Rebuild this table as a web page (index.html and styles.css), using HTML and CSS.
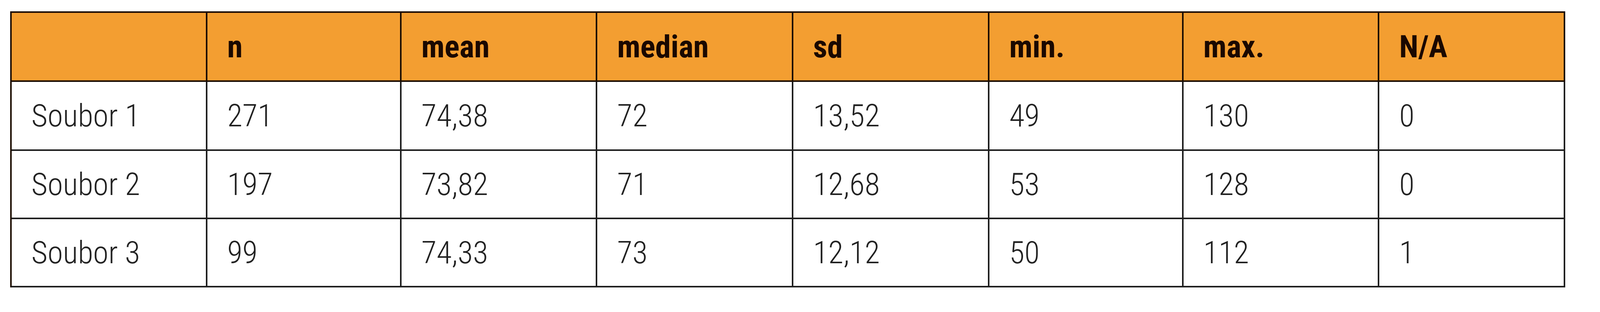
FILE: index.html
```html
<!DOCTYPE html>
<html lang="cs">
<head>
<meta charset="utf-8">
<title>Soubory – statistiky</title>
<link rel="stylesheet" href="styles.css">
</head>
<body>
<table class="stats">
  <colgroup>
    <col class="c-wide"><col class="c-narrow"><col class="c-wide"><col class="c-wide">
    <col class="c-wider"><col class="c-narrow"><col class="c-wide"><col class="c-last">
  </colgroup>
  <thead>
    <tr class="head-row">
      <th></th><th>n</th><th>mean</th><th>median</th><th>sd</th><th>min.</th><th>max.</th><th>N/A</th>
    </tr>
  </thead>
  <tbody>
    <tr class="row-1">
      <td>Soubor 1</td><td>271</td><td>74,38</td><td>72</td><td>13,52</td><td>49</td><td>130</td><td>0</td>
    </tr>
    <tr class="row-2">
      <td>Soubor 2</td><td>197</td><td>73,82</td><td>71</td><td>12,68</td><td>53</td><td>128</td><td>0</td>
    </tr>
    <tr class="row-3">
      <td>Soubor 3</td><td>99</td><td>74,33</td><td>73</td><td>12,12</td><td>50</td><td>112</td><td>1</td>
    </tr>
  </tbody>
</table>
</body>
</html>
```
FILE: styles.css
```css
html, body {
  margin: 0;
  padding: 0;
  background: #ffffff;
}

body {
  padding-top: 29px;
  font-family: "Roboto Condensed", "Roboto", "Liberation Sans", sans-serif;
}

.stats {
  margin-left: 0.623vw;
  width: 97.208vw;
  table-layout: fixed;
  border-collapse: separate;
  border-spacing: 0;
  border-top: 4px solid #1c0d02;
  border-left: 4px solid #1c0d02;
}

.c-wide   { width: 12.605%; }
.c-wider  { width: 12.627%; }
.c-narrow { width: 12.494%; }
.c-last   { width: 11.964%; }

.stats th,
.stats td {
  box-sizing: border-box;
  padding: 0 0 0 1.24vw;
  text-align: left;
  vertical-align: middle;
  white-space: nowrap;
  border-right: 4px solid #1e1e1e;
  border-bottom: 4px solid #1e1e1e;
  font-size: 80px;
  line-height: normal;
}

.stats th {
  height: 177px;
  background: #f39e31;
  color: #1a0800;
  font-weight: 700;
  border-right-color: #1c0d02;
  border-bottom-color: #1c0d02;
}

.stats td {
  color: #222222;
  font-weight: 300;
}

.row-1 td { height: 177px; }
.row-2 td { height: 175px; }
.row-3 td { height: 175px; }
```
